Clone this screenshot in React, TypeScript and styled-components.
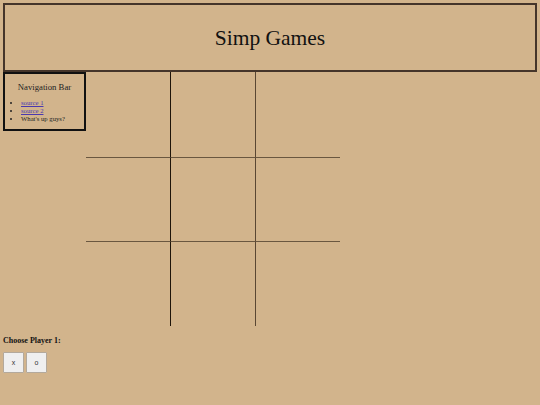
import React from "react";
import styled, { createGlobalStyle } from "styled-components";

const Global = createGlobalStyle`
  html, body {
    margin: 0;
    padding: 0;
    background: #d2b48c;
  }
  body {
    padding: 3px;
    font-family: "Liberation Serif", "Times New Roman", serif;
    color: #000;
  }
`;

const Page = styled.div`
  display: flex;
  flex-direction: column;
`;

const Header = styled.header`
  height: 69px;
  box-sizing: border-box;
  border: 2px solid #45352a;
  display: flex;
  align-items: center;
  justify-content: center;
`;

const Title = styled.h1`
  margin: 0;
  font-weight: normal;
  font-size: 21.5px;
  line-height: 24px;
  color: #111;
`;

const Main = styled.div`
  display: flex;
  align-items: flex-start;
`;

const Nav = styled.nav`
  width: 83px;
  box-sizing: border-box;
  border: 2px solid #111;
  padding: 0 0 6px;
`;

const NavTitle = styled.div`
  text-align: center;
  font-size: 8.7px;
  line-height: 10px;
  margin: 8px 0 7px;
  color: #222;
`;

const NavList = styled.ul`
  margin: 0;
  padding-left: 16px;
  font-size: 6.7px;
  line-height: 8px;
  color: #222;
`;

const NavLink = styled.a`
  color: #4a38b0;
  text-decoration: underline;
`;

const Board = styled.div`
  display: grid;
  grid-template-columns: 85px 85px 84px;
  grid-template-rows: 86px 84px 84px;
`;

const Cell = styled.div<{ $right: string | null; $bottom: boolean }>`
  box-sizing: border-box;
  border-right: ${(p) => (p.$right ? `1px solid ${p.$right}` : "none")};
  border-bottom: ${(p) => (p.$bottom ? "1px solid #6a5740" : "none")};
`;

const Label = styled.div`
  font-weight: bold;
  font-size: 8px;
  line-height: 10px;
  margin-top: 10px;
  color: #111;
`;

const Buttons = styled.div`
  display: flex;
  gap: 2px;
  margin-top: 6px;
`;

const PlayerButton = styled.button`
  width: 21px;
  height: 21px;
  box-sizing: border-box;
  padding: 0;
  background: #efefef;
  border: 1px solid #b3a99c;
  border-radius: 1px;
  font-family: "Liberation Sans", Arial, sans-serif;
  font-size: 7px;
  color: #333;
  display: flex;
  align-items: center;
  justify-content: center;
`;

export default function App() {
  const cells = Array.from({ length: 9 }, (_, i) => i);
  return (
    <>
      <Global />
      <Page>
        <Header>
          <Title>Simp Games</Title>
        </Header>
        <Main>
          <Nav>
            <NavTitle>Navigation Bar</NavTitle>
            <NavList>
              <li>
                <NavLink href="#">source 1</NavLink>
              </li>
              <li>
                <NavLink href="#">source 2</NavLink>
              </li>
              <li>What's up guys?</li>
            </NavList>
          </Nav>
          <Board>
            {cells.map((i) => {
              const col = i % 3;
              const row = Math.floor(i / 3);
              const right = col === 0 ? "#1e140a" : col === 1 ? "#5a4733" : null;
              return <Cell key={i} $right={right} $bottom={row < 2} />;
            })}
          </Board>
        </Main>
        <Label>Choose Player 1:</Label>
        <Buttons>
          <PlayerButton>x</PlayerButton>
          <PlayerButton>o</PlayerButton>
        </Buttons>
      </Page>
    </>
  );
}
